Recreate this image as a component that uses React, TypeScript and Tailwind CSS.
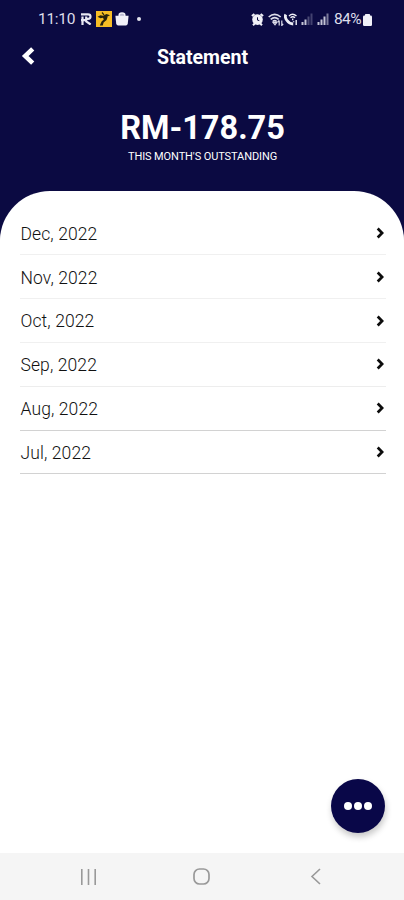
import React from 'react';

const months = [
  { label: 'Dec, 2022', line: 'border-[#f0f0f0]' },
  { label: 'Nov, 2022', line: 'border-[#f0f0f0]' },
  { label: 'Oct, 2022', line: 'border-[#f0f0f0]' },
  { label: 'Sep, 2022', line: 'border-[#ededed]' },
  { label: 'Aug, 2022', line: 'border-[#d2d2d2]' },
  { label: 'Jul, 2022', line: 'border-[#d2d2d2]' },
];

const Signal: React.FC<{ className?: string; strong?: boolean }> = ({ className, strong }) => (
  <svg className={className} width="12" height="12" viewBox="0 0 12 12" fill="#c4c4d6">
    <rect x="0.5" y="9" width="2" height="3" />
    <rect x="3.5" y="6.5" width="2" height="5.5" />
    <rect x="6.5" y="3.5" width="2" height="8.5" opacity={strong ? 1 : 0.35} />
    <rect x="9.5" y="0.5" width="2" height="11.5" opacity={strong ? 0.6 : 0.3} />
  </svg>
);

const StatusBar: React.FC = () => (
  <div className="flex h-[38px] items-center pl-[38px] pr-8 text-[#dedeea]">
    <span className="mt-[2px] w-[37px] whitespace-nowrap text-[15.5px] tracking-[-0.3px]">11:10</span>
    <svg className="ml-[6px]" width="11" height="12" viewBox="0 0 11 12" fill="none" stroke="#e8e8f2" strokeWidth="2.2">
      <path d="M0 1.3h7q2.5 0 2.5 2.3T7 5.9H4.5M1.5 3.6V12M5.2 3.5v5L9.7 11.5M0 7.2h6" />
    </svg>
    <svg className="ml-1" width="16" height="16" viewBox="0 0 16 16">
      <rect width="16" height="16" fill="#f7bd25" />
      <path d="M1.5 5.8 4.5 4.2 7 4.8 10.5 3 14 4.2 11.5 5.6 10.6 9 7.6 11.5 6.8 14.5H3.8L5.6 10.5 7.8 8.5 7 6.8 4.5 7.2Z" fill="#29230c" />
      <path d="m6 1.5 2 2.3M9.2 7.8l2-1.2" stroke="#29230c" strokeWidth="1.2" />
    </svg>
    <svg className="ml-[3px]" width="14" height="14" viewBox="0 0 14 14">
      <path d="M4.2 5V2.9a2.8 2 0 0 1 5.6 0V5" fill="#b9b9cf" stroke="#f1f1f8" strokeWidth="1.5" />
      <path d="M.4 3.8h13.2l-.8 7.6q-.3 2-2 2H3.2q-1.7 0-2-2Z" fill="#f1f1f8" />
    </svg>
    <span className="ml-2 size-1 rounded-full bg-[#e4e4ee]" />

    <svg className="ml-auto" width="13" height="13" viewBox="0 0 13 13">
      <path d="m.9 3 2.5-2M12.1 3 9.6 1M2 12.3l2-2M11 12.3l-2-2" stroke="#f1f1f8" strokeWidth="2" />
      <circle cx="6.5" cy="6.6" r="5.3" fill="#f1f1f8" />
      <path d="M6.5 4.3v2.8l1.8.5" fill="none" stroke="#0b0a42" strokeWidth="1" />
    </svg>
    <svg className="ml-1" width="16" height="13" viewBox="0 0 16 13" fill="none" stroke="#dcdce9">
      <path d="M.7 4q6-5.4 12 0M2.7 6.4q4-3.6 8 0M4.7 8.5q2-1.8 4 0" strokeWidth="1.6" />
      <path d="m5 9.3 2 2.4 1.8-2.4ZM11.2 7.5v5M9.8 9l1.4-1.6M13.8 7.5v5l1.4-1.6" strokeWidth="1.2" />
    </svg>
    <svg width="14" height="13" viewBox="0 0 14 13" fill="none" stroke="#eeeef6">
      <path d="M1.8 1.5Q.5 4 2.8 7.3 5.5 11 9.2 11" strokeWidth="2.8" />
      <path d="M5 3q3.5-3.4 7.5 0M6.5 4.8q2.2-2 4.5 0M8.7 5.5v1.7M12.2 7v5M9.6 8.3v1" strokeWidth="1.4" />
    </svg>
    <Signal className="ml-[3px]" />
    <Signal className="ml-1" strong />
    <span className="ml-[5px] mt-px w-[28px] whitespace-nowrap text-[15.5px] tracking-[-0.6px]">84%</span>
    <svg className="ml-px mt-px" width="9" height="12" viewBox="0 0 9 12" fill="#f1f1f8">
      <rect x="2" width="5" height="3" rx="0.6" />
      <rect y="1.6" width="9" height="10.4" rx="1.2" />
    </svg>
  </div>
);

const App: React.FC = () => {
  return (
    <div className="relative flex h-[900px] w-[404px] flex-col overflow-hidden bg-white font-['Roboto',sans-serif]">
      <header className="h-[191px] shrink-0 bg-[#0b0a42] text-white">
        <StatusBar />
        <div className="grid h-[38px] grid-cols-[1fr_auto_1fr] items-center">
          <button aria-label="Back" className="ml-[21px] -mt-[3px] w-fit">
            <svg width="14" height="18" viewBox="0 0 14 18" fill="none" stroke="white" strokeWidth="4.6">
              <path d="M11.7 1.8 4.2 9l7.5 7.2" />
            </svg>
          </button>
          <h1 className="mt-px pl-px text-[19.5px] font-bold leading-6">Statement</h1>
        </div>
        <div className="flex flex-col items-center pl-px pt-8">
          <p className="text-[32.5px] font-bold leading-10">RM-178.75</p>
          <p className="mt-[3px] text-[11px] leading-3 tracking-[-0.1px]">THIS MONTH'S OUTSTANDING</p>
        </div>
      </header>

      <main className="flex-1 bg-[linear-gradient(#0b0a42_42px,#ffffff_50px)]">
        <ul className="h-full rounded-t-[50px] bg-white pl-5 pr-[18px] pt-[20.6px]">
          {months.map((month) => (
            <li key={month.label} className={`flex h-[43.8px] items-center justify-between border-b-[1.5px] ${month.line}`}>
              <span className="mt-[2px] pl-[0.5px] text-[17.5px] font-light tracking-[0.1px] text-[#111111]">{month.label}</span>
              <svg className="mr-px" width="9" height="12" viewBox="0 0 9 12" fill="none" stroke="#0c0c0c" strokeWidth="2.7">
                <path d="m1.7 1.5 4.4 4.5-4.4 4.5" />
              </svg>
            </li>
          ))}
        </ul>
      </main>

      <nav className="flex h-[47px] shrink-0 items-center bg-[#f5f5f5]">
        <svg className="ml-[80px]" width="17" height="16" viewBox="0 0 17 16" stroke="#999999" strokeWidth="1.6">
          <path d="M1.8 0v16M8.5 0v16M15.2 0v16" />
        </svg>
        <svg className="ml-[96px]" width="17" height="17" viewBox="0 0 17 17" fill="none" stroke="#999999" strokeWidth="1.7">
          <rect x="1" y="1" width="15" height="15" rx="5.5" />
        </svg>
        <svg className="ml-[100px]" width="11" height="17" viewBox="0 0 11 17" fill="none" stroke="#999999" strokeWidth="1.6">
          <path d="M10 1 2 8.5l8 7.5" />
        </svg>
      </nav>

      <button
        aria-label="More"
        className="absolute left-[331px] top-[779px] flex size-[54px] items-center justify-center gap-[2px] rounded-full bg-[#090748] shadow-[1px_4px_6px_rgba(0,0,0,0.22)]"
      >
        <span className="size-2 rounded-full bg-white" />
        <span className="size-2 rounded-full bg-white" />
        <span className="size-2 rounded-full bg-white" />
      </button>
    </div>
  );
};

export default App;
